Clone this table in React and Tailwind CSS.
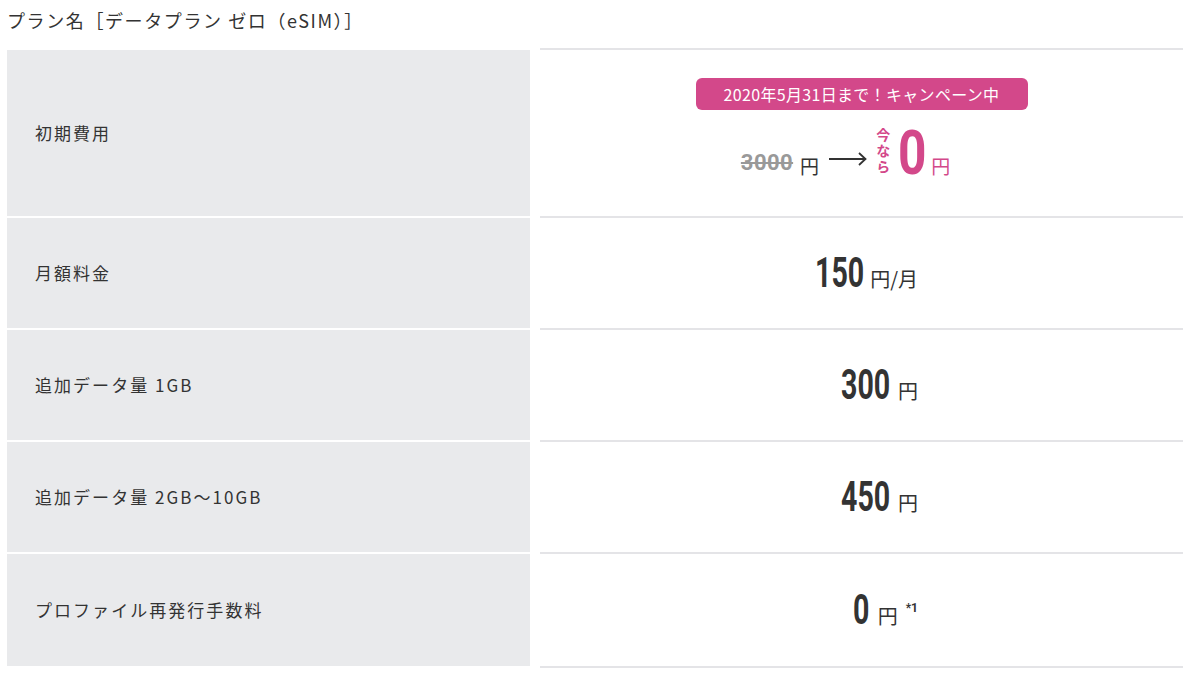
import React from 'react';

const jp = "font-['Noto_Sans_CJK_JP','Noto_Sans',sans-serif]";
const num = "font-['Roboto','Liberation_Sans',sans-serif] font-bold";

// number + unit group, right aligned in a fixed box like the source table
function Price({ box, value, children }) {
    return (
        <div className="w-[106px] ml-[7px] flex items-end justify-end text-[#333]">
            <span className={`inline-block ${box} h-[36px]`}>
                <span className={`inline-block origin-left scale-x-[0.68] ${num} text-[42px] leading-[36px] whitespace-nowrap`}>
                    {value}
                </span>
            </span>
            {children}
        </div>
    );
}

function Row({ label, first, last, children }) {
    return (
        <div className="flex">
            <div className="w-[523px] ml-[7px] border-t-2 border-white">
                <div className={`bg-[#e9eaec] flex items-center pl-[28px] ${first ? 'h-[166px]' : last ? 'h-[112px]' : 'h-[110px]'}`}>
                    <span className={`${jp} text-[17px] tracking-[0.12em] text-[#333]`}>{label}</span>
                </div>
            </div>
            <div className={`ml-[10px] w-[643px] border-t-2 border-[#e4e4e7] ${last ? 'border-b-2' : ''}`}>
                {children}
            </div>
        </div>
    );
}

export default function App() {
    return (
        <div className={`bg-white w-[1200px] h-[676px] overflow-hidden ${jp}`}>
            <div className="h-[48px] pl-[7px] flex items-center">
                <h2 className="text-[18px] tracking-[1.6px] text-[#333] -mt-[8px]">プラン名［データプラン ゼロ（eSIM）］</h2>
            </div>

            <Row label="初期費用" first>
                <div className="flex flex-col items-center pt-[28px]">
                    <div className="w-[332px] h-[32px] rounded-[6px] bg-[#d3488a] flex items-center justify-center text-white text-[16px] tracking-[0.02em]">
                        2020年5月31日まで！キャンペーン中
                    </div>
                    <div className="flex items-end mt-[18px] pr-[32px]">
                        <span className={`${num} text-[22px] leading-none text-[#999] line-through decoration-2 mb-[5px] tracking-[0.02em]`}>3000</span>
                        <span className="text-[19px] leading-none text-[#333] ml-[7px] mb-[4px]">円</span>
                        <svg width="38" height="14" viewBox="0 0 38 14" className="ml-[10px] mb-[13px]">
                            <path d="M0 7 H36 M30 1 L36.5 7 L30 13" stroke="#333" strokeWidth="1.8" fill="none" />
                        </svg>
                        <span className="ml-[8px] mb-[1px] h-[50px] text-[14px] leading-[15px] font-bold text-[#d3488a] tracking-[2px] [writing-mode:vertical-rl]">
                            今なら
                        </span>
                        <span className="inline-block w-[24px] h-[46px] ml-[8px] mb-[3px]">
                            <span className={`inline-block origin-left scale-x-[0.8] ${num} text-[62px] leading-[46px] text-[#d3488a]`}>0</span>
                        </span>
                        <span className="text-[19px] leading-none text-[#d3488a] ml-[9px] mb-[4px]">円</span>
                    </div>
                </div>
            </Row>

            <Row label="月額料金">
                <div className="h-[110px] flex items-center justify-center">
                    <Price box="w-[48px]" value="150">
                        <span className="text-[20px] leading-none ml-[7px] mb-[2px]">円/月</span>
                    </Price>
                </div>
            </Row>

            <Row label="追加データ量 1GB">
                <div className="h-[110px] flex items-center justify-center">
                    <Price box="w-[49px]" value="300">
                        <span className="text-[20px] leading-none ml-[8px] mb-[2px]">円</span>
                    </Price>
                </div>
            </Row>

            <Row label="追加データ量 2GB〜10GB">
                <div className="h-[110px] flex items-center justify-center">
                    <Price box="w-[49px]" value="450">
                        <span className="text-[20px] leading-none ml-[8px] mb-[2px]">円</span>
                    </Price>
                </div>
            </Row>

            <Row label="プロファイル再発行手数料" last>
                <div className="h-[112px] flex items-center justify-center">
                    <Price box="w-[17px]" value="0">
                        <span className="text-[20px] leading-none ml-[8px] mb-[2px]">円</span>
                        <span className={`${num} text-[12px] leading-none ml-[8px] mb-[14px]`}>*1</span>
                    </Price>
                </div>
            </Row>
        </div>
    );
}
